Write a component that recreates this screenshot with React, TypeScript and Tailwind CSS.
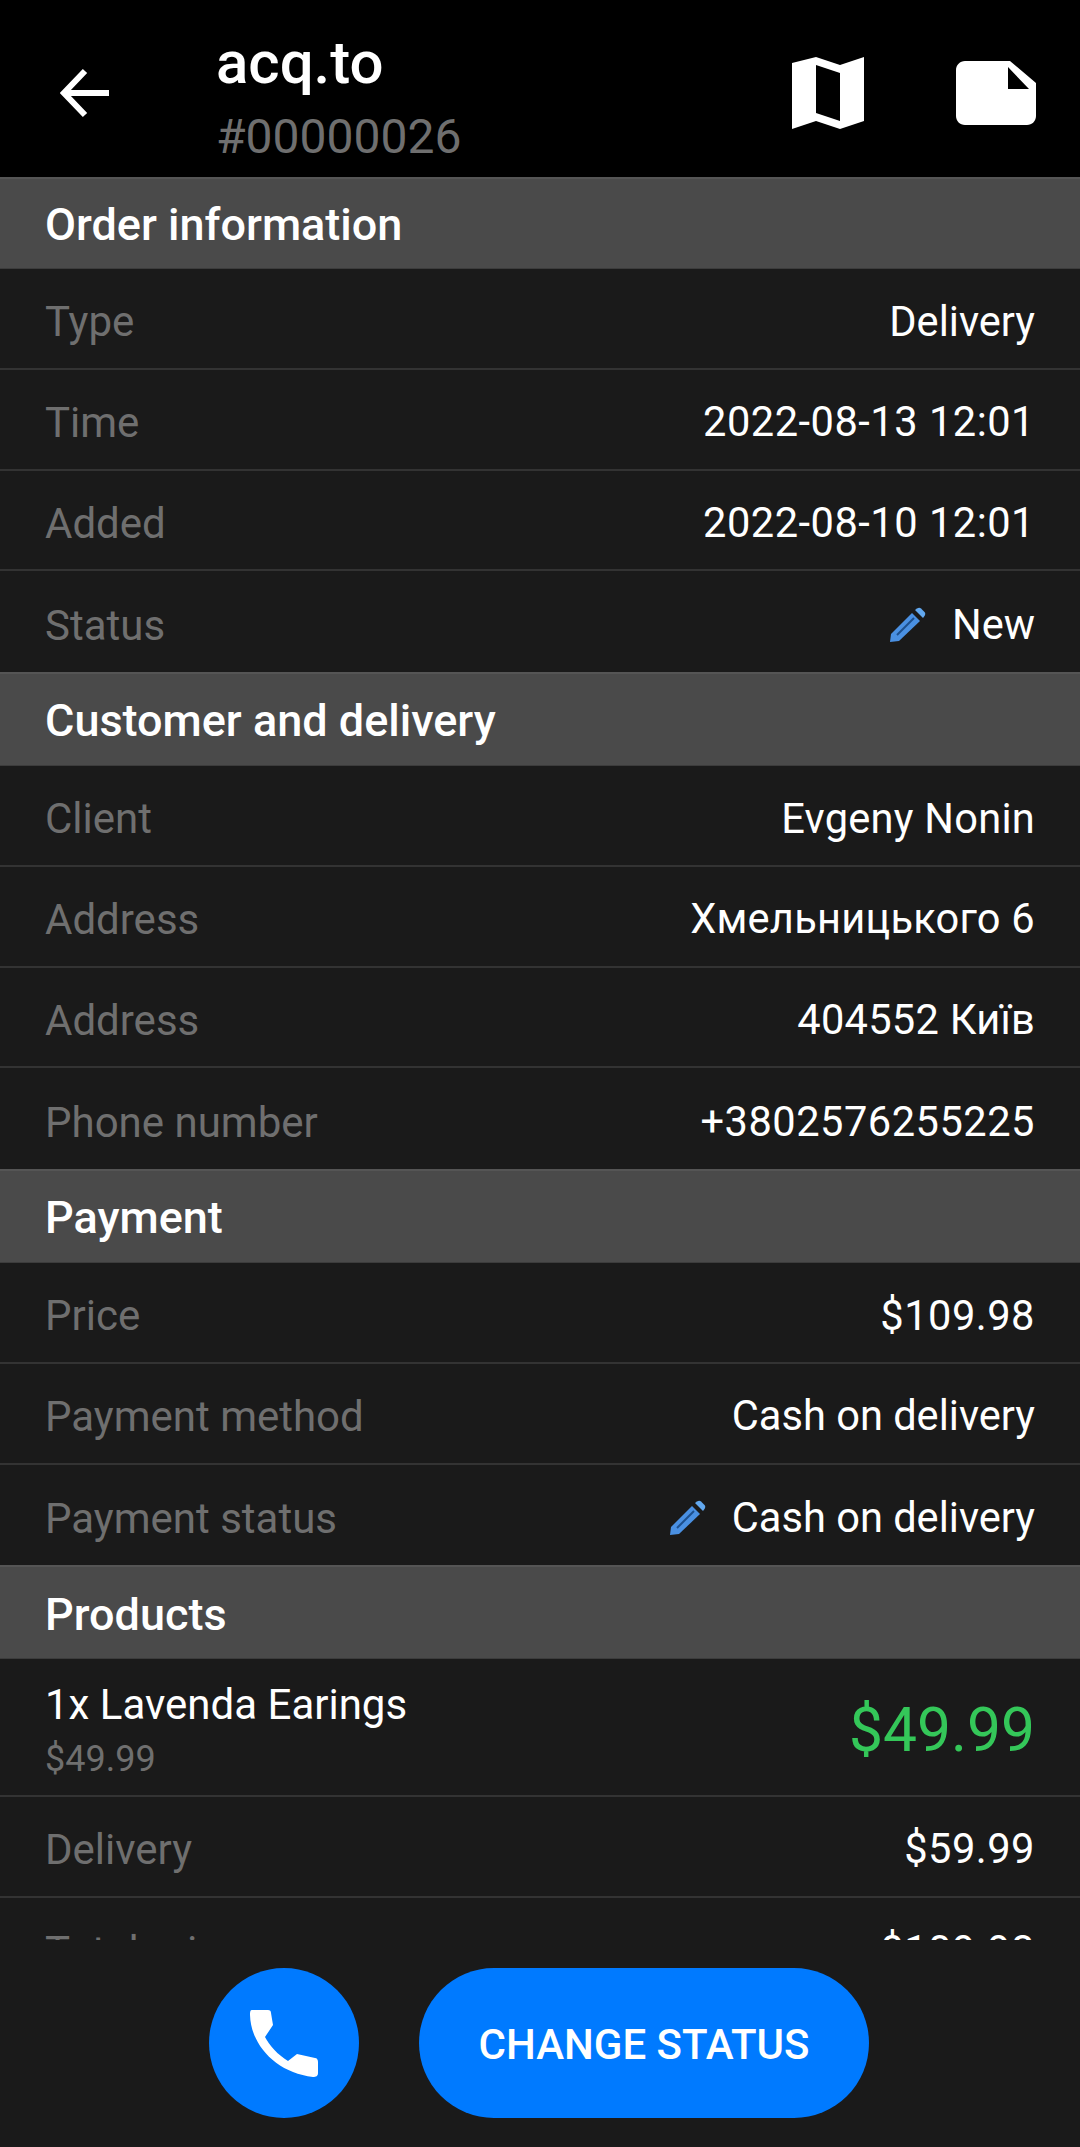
const Pencil = () => (
  <svg viewBox="0 0 37 36" className="w-[37px] h-[36px] mr-[26px]">
    <path d="M1 35 L2 27 L23 6 L31 14 L10 34 Z" fill="#4a90e2" />
    <path d="M8 28 L25 11" stroke="#1d4f8c" strokeWidth="2" fill="none" />
    <path d="M26 3 L28 1.5 C29.5 .5 31 .5 32 1.5 L35.5 5 C36.5 6 36.5 7.5 35.5 9 L34 11 Z" fill="#62a8ef" />
  </svg>
);

const Section = ({ title, first }: { title: string; first?: boolean }) => (
  <div className={(first ? "h-[92px]" : "h-[94px]") + " shrink-0 bg-[#4a4a4a] border-t-2 border-t-[#555555] border-b border-b-[#3c3c3c] flex items-center pt-[3px] px-[45px] text-white text-[45px] font-medium"}>
    {title}
  </div>
);

const Row = ({ label, value, edit, last, digits, wide }: { label: string; value: string; edit?: boolean; last?: boolean; digits?: boolean; wide?: boolean }) => (
  <div className={"h-[100.75px] shrink-0 flex items-center justify-between pt-[7px] px-[45px] " + (last ? "" : "border-b-2 border-b-[#333333]")}>
    <span className="text-[#6f6f6f] text-[42px]">{label}</span>
    <span className={"flex items-center text-white text-[41.6px] " + (digits ? "tracking-[0.5px]" : wide ? "tracking-[0.25px]" : "")}>
      {edit && <Pencil />}
      {value}
    </span>
  </div>
);

export default function App() {
  return (
    <div className="w-[1080px] h-[2147px] flex flex-col bg-[#1a1a1a] overflow-hidden font-['Roboto',sans-serif]">
      <header className="h-[177px] shrink-0 bg-black flex items-center pt-[9px]">
        <svg viewBox="0 0 50 50" className="w-[50px] h-[50px] ml-[60px] mr-[106px] shrink-0" fill="none" stroke="#fff" strokeWidth="6">
          <path d="M49 25 H4 M25 3 L4 25 L25 47" />
        </svg>
        <div className="flex flex-col flex-1 mt-[16px]">
          <span className="text-white text-[60px] font-medium leading-[66px]">acq.to</span>
          <span className="text-[#6f6f6f] text-[48px] leading-[72px] mt-[5px]">#00000026</span>
        </div>
        <svg viewBox="0 0 72 72" className="w-[72px] h-[72px] mr-[92px] shrink-0" fill="#fff">
          <path fillRule="evenodd" d="M0 6 L24 0 L48 8 L72 0 V64 L48 72 L24 64 L0 72 Z M24 8 V56 L48 64 V16 Z" />
        </svg>
        <svg viewBox="0 0 80 64" className="w-[80px] h-[64px] mr-[44px] shrink-0" fill="#fff">
          <path fillRule="evenodd" d="M9 0 H54 L80 22 V55 C80 60 76 64 71 64 H9 C4 64 0 60 0 55 V9 C0 4 4 0 9 0 Z M52 6 V28 H73 Z" />
        </svg>
      </header>
      <main className="h-[1763px] shrink-0 overflow-hidden flex flex-col">
        <Section title="Order information" first />
        <Row label="Type" value="Delivery" />
        <Row label="Time" value="2022-08-13 12:01" digits />
        <Row label="Added" value="2022-08-10 12:01" digits />
        <Row label="Status" value="New" edit last />
        <Section title="Customer and delivery" />
        <Row label="Client" value="Evgeny Nonin" wide />
        <Row label="Address" value="Хмельницького 6" wide />
        <Row label="Address" value="404552 Київ" wide />
        <Row label="Phone number" value="+3802576255225" last digits />
        <Section title="Payment" />
        <Row label="Price" value="$109.98" digits />
        <Row label="Payment method" value="Cash on delivery" />
        <Row label="Payment status" value="Cash on delivery" edit last />
        <Section title="Products" />
        <div className="h-[137.5px] shrink-0 flex items-center justify-between px-[45px] border-b-2 border-b-[#333333]">
          <div className="flex flex-col pt-[9px]">
            <span className="text-white text-[42px] leading-[46px]">1x Lavenda Earings</span>
            <span className="text-[#6f6f6f] text-[36px] leading-[44px] mt-[9px]">$49.99</span>
          </div>
          <span className="text-[#34c759] text-[60.5px] pt-[9px]">$49.99</span>
        </div>
        <Row label="Delivery" value="$59.99" digits />
        <Row label="Total price" value="$109.98" last digits />
      </main>
      <footer className="flex-1 flex items-start justify-center gap-[60px] pt-[28px] pr-[2px]">
        <button className="w-[150px] h-[150px] rounded-full bg-[#007aff] flex items-center justify-center">
          <svg viewBox="15 19 68 67" className="w-[68px] h-[67px]" fill="#fff">
            <path d="M17 19 H33 C35 19 36 20 36 22 L38 34 L30 46 C34 54 43 64 53 70 L62 63 L80 67 C82 67 83 69 83 71 V82 C83 85 81 86 78 86 C42 82 16 55 15 24 C15 21 15 19 17 19 Z" />
          </svg>
        </button>
        <button className="w-[450px] h-[150px] rounded-full bg-[#007aff] text-white text-[42px] font-medium flex items-center justify-center pt-[3px]">
          CHANGE STATUS
        </button>
      </footer>
    </div>
  );
}
